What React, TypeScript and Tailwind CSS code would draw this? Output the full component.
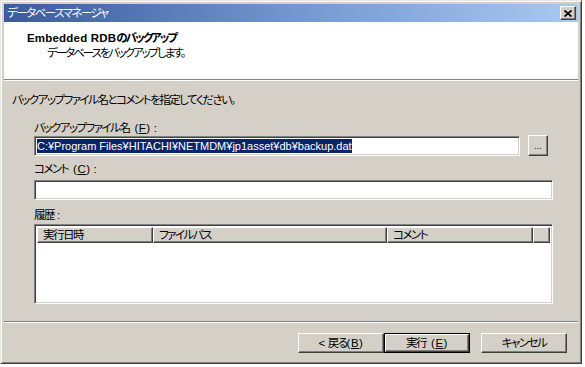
import React from "react";

const raised =
  "bg-[#d4d0c8] border border-t-white border-l-white border-r-[#404040] border-b-[#404040] shadow-[inset_-1px_-1px_0_#808080]";
const sunken =
  "bg-white border border-t-[#808080] border-l-[#808080] border-r-white border-b-white shadow-[inset_1px_1px_0_#404040,inset_-1px_-1px_0_#d4d0c8]";

function HeaderCell({ w, children }: { w?: string; children?: React.ReactNode }) {
  return (
    <div className={`${raised} ${w ?? "flex-1"} h-[16px] flex items-center pl-[5px] leading-[12px] whitespace-nowrap overflow-hidden`}>
      {children}
    </div>
  );
}

function Key({ k }: { k: string }) {
  return (
    <span className="tracking-[0.5px]">
      (<span className="underline">{k}</span>)
    </span>
  );
}

export default function App() {
  return (
    <div className="w-[585px] h-[367px] bg-white font-['Liberation_Sans','Noto_Sans_CJK_JP',sans-serif] text-[11.5px] leading-[14px] tracking-[-1.5px] text-black [font-feature-settings:'palt']">
      <div className="w-[582px] h-[364px] flex flex-col bg-[#d4d0c8] border border-t-[#e8e6e1] border-l-[#e8e6e1] border-r-[#404040] border-b-[#404040] shadow-[inset_1px_1px_0_#fff,inset_-1px_-1px_0_#808080] p-[3px]">
        {/* Title bar */}
        <div className="h-[18px] shrink-0 flex items-center bg-linear-to-r from-[#3a5a9e] via-[#7396d0] to-[#a8caf0] pl-[3px]">
          <span className="text-white leading-[14px]">データベースマネージャ</span>
          <div className={`${raised} ml-auto mr-[2px] w-[16px] h-[14px] flex items-center justify-center`}>
            <svg width="8" height="7" viewBox="0 0 8 7">
              <path d="M0.5 0.5 L7.5 6.5 M7.5 0.5 L0.5 6.5" stroke="#000" strokeWidth="1.8" fill="none" />
            </svg>
          </div>
        </div>

        {/* Header */}
        <div className="h-[57px] shrink-0 bg-white pt-[9px]">
          <div className="pl-[23px] font-bold">
            <span className="tracking-[0.2px]">Embedded RDB</span>
            <span className="tracking-[-2px]">のバックアップ</span>
          </div>
          <div className="pl-[43px] mt-[1px] tracking-[-2px]">データベースをバックアップします。</div>
        </div>
        <div className="h-[2px] shrink-0 border-t border-t-[#808080] border-b border-b-white" />

        {/* Body */}
        <div className="flex-1 flex flex-col pt-[12px]">
          <div className="pl-[8px]">バックアップファイル名とコメントを指定してください。</div>
          <div className="pl-[30px] pr-[25px] flex flex-col">
            <div className="mt-[14px]">
              バックアップファイル名<span className="ml-[5px]" />
              <Key k="F" />
              <span className="ml-[3px]">:</span>
            </div>
            <div className="flex items-center gap-[8px]">
              <div className={`${sunken} w-[486px] h-[20px] flex items-center pl-[2px]`}>
                <span className="bg-[#0a246a] text-white text-[11px] tracking-normal leading-[14px] whitespace-nowrap">
                  C:¥Program Files¥HITACHI¥NETMDM¥jp1asset¥db¥backup.dat
                </span>
              </div>
              <div className={`${raised} w-[20px] h-[21px] flex items-end justify-center pb-[4px] text-[9px] leading-[9px] tracking-normal`}>
                ...
              </div>
            </div>
            <div className="mt-[6px]">
              コメント<span className="ml-[5px]" />
              <Key k="C" />
              <span className="ml-[3px]">:</span>
            </div>
            <div className={`${sunken} mt-[4px] h-[20px]`} />
            <div className="mt-[8px]">
              履歴<span className="ml-[3px]">:</span>
            </div>
            <div className={`${sunken} mt-[2px] h-[80px] p-[2px] flex flex-col`}>
              <div className="flex">
                <HeaderCell w="w-[116px]">実行日時</HeaderCell>
                <HeaderCell w="w-[234px]">ファイルパス</HeaderCell>
                <HeaderCell w="w-[146px]">コメント</HeaderCell>
                <HeaderCell />
              </div>
            </div>
          </div>

          <div className="mt-[17px] h-[2px] border-t border-t-[#808080] border-b border-b-white" />

          <div className="mt-[10px] flex justify-end pr-[11px]">
            <div className={`${raised} w-[86px] h-[20px] flex items-center justify-center`}>
              &lt;<span className="ml-[4px]">戻る</span>
              <Key k="B" />
            </div>
            <div className="w-[86px] h-[20px] border border-black">
              <div className={`${raised} w-full h-full flex items-center justify-center`}>
                実行<span className="ml-[5px]" />
                <Key k="E" />
              </div>
            </div>
            <div className={`${raised} ml-[11px] w-[86px] h-[20px] flex items-center justify-center`}>
              キャンセル
            </div>
          </div>
        </div>
      </div>
    </div>
  );
}
